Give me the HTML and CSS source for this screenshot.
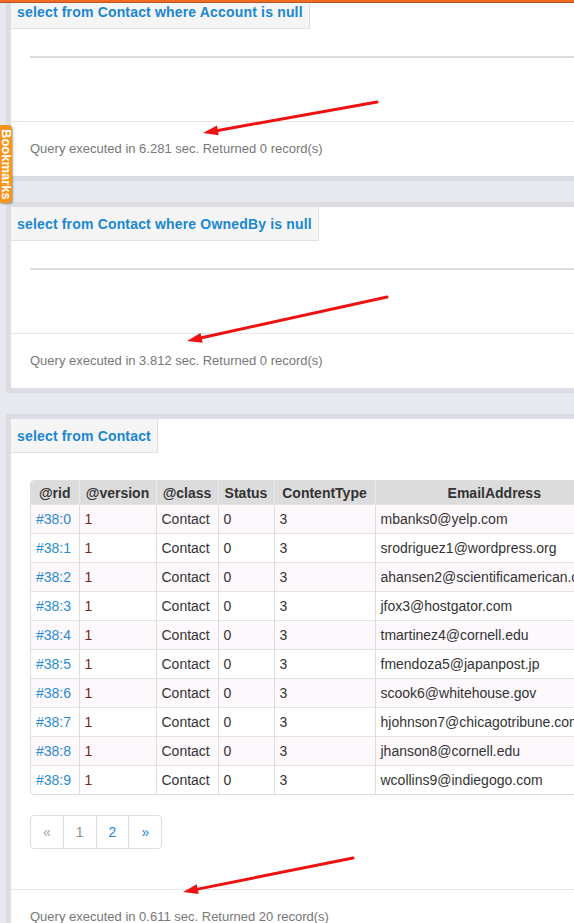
FILE: index.html
```html
<!DOCTYPE html>
<html>
<head>
<meta charset="utf-8">
<link rel="stylesheet" href="styles.css">
</head>
<body>
<div class="topbar"></div>
<div class="page">
  <section class="panel">
    <div class="qhead"><span class="qtab">select from Contact where Account is null</span></div>
    <div class="qbody"><div class="empty"></div></div>
    <div class="qfoot">Query executed in 6.281 sec. Returned 0 record(s)</div>
  </section>
  <section class="panel">
    <div class="qhead"><span class="qtab">select from Contact where OwnedBy is null</span></div>
    <div class="qbody"><div class="empty"></div></div>
    <div class="qfoot">Query executed in 3.812 sec. Returned 0 record(s)</div>
  </section>
  <section class="panel">
    <div class="qhead"><span class="qtab">select from Contact</span></div>
    <div class="qbody">
      <div class="grid">
        <table>
          <colgroup><col class="c1"><col class="c2"><col class="c3"><col class="c4"><col class="c5"><col class="c6"></colgroup>
          <thead><tr><th>@rid</th><th>@version</th><th>@class</th><th>Status</th><th>ContentType</th><th>EmailAddress</th></tr></thead>
          <tbody>
            <tr><td><a class="rid">#38:0</a></td><td class="ver">1</td><td>Contact</td><td>0</td><td>3</td><td>mbanks0@yelp.com</td></tr>
            <tr><td><a class="rid">#38:1</a></td><td class="ver">1</td><td>Contact</td><td>0</td><td>3</td><td>srodriguez1@wordpress.org</td></tr>
            <tr><td><a class="rid">#38:2</a></td><td class="ver">1</td><td>Contact</td><td>0</td><td>3</td><td>ahansen2@scientificamerican.com</td></tr>
            <tr><td><a class="rid">#38:3</a></td><td class="ver">1</td><td>Contact</td><td>0</td><td>3</td><td>jfox3@hostgator.com</td></tr>
            <tr><td><a class="rid">#38:4</a></td><td class="ver">1</td><td>Contact</td><td>0</td><td>3</td><td>tmartinez4@cornell.edu</td></tr>
            <tr><td><a class="rid">#38:5</a></td><td class="ver">1</td><td>Contact</td><td>0</td><td>3</td><td>fmendoza5@japanpost.jp</td></tr>
            <tr><td><a class="rid">#38:6</a></td><td class="ver">1</td><td>Contact</td><td>0</td><td>3</td><td>scook6@whitehouse.gov</td></tr>
            <tr><td><a class="rid">#38:7</a></td><td class="ver">1</td><td>Contact</td><td>0</td><td>3</td><td>hjohnson7@chicagotribune.com</td></tr>
            <tr><td><a class="rid">#38:8</a></td><td class="ver">1</td><td>Contact</td><td>0</td><td>3</td><td>jhanson8@cornell.edu</td></tr>
            <tr><td><a class="rid">#38:9</a></td><td class="ver">1</td><td>Contact</td><td>0</td><td>3</td><td>wcollins9@indiegogo.com</td></tr>
          </tbody>
        </table>
      </div>
      <nav class="pager">
        <a class="dis">&laquo;</a><a class="cur">1</a><a>2</a><a>&raquo;</a>
      </nav>
    </div>
    <div class="qfoot">Query executed in 0.611 sec. Returned 20 record(s)</div>
  </section>
</div>
<div class="bookmarks"><span class="bm-text">Bookmarks</span></div>
<svg class="marks" width="574" height="923" viewBox="0 0 574 923">
  <g stroke="#ee1111" stroke-width="3" stroke-linecap="round" fill="#ee1111">
    <line x1="377" y1="102" x2="217.8" y2="130.4"/>
    <line x1="387" y1="297" x2="201.6" y2="337.8"/>
    <line x1="353" y1="858" x2="197.7" y2="889.1"/>
  </g>
  <g fill="#ee1111">
    <polygon points="203,133 218.7,135.3 216.9,125.5"/>
    <polygon points="187,341 202.7,342.7 200.5,332.9"/>
    <polygon points="183,892 198.7,894 196.7,884.2"/>
  </g>
</svg>
</body>
</html>
```
FILE: styles.css
```css
html, body {
  margin: 0;
  padding: 0;
}
body {
  background: #e8e9ee;
  font-family: "Liberation Sans", Arial, sans-serif;
  width: 574px;
  height: 923px;
  overflow: hidden;
  position: relative;
}
.topbar {
  position: fixed;
  top: 0;
  left: 0;
  right: 0;
  height: 2px;
  background: #f36b21;
  box-shadow: 0 1px 0 #b0562a;
  z-index: 5;
}
.page {
  margin-top: -10px;
  padding-left: 6px;
  width: 700px;
}
.panel {
  background: #fff;
  border: 5px solid #dcdde2;
  margin-bottom: 21px;
}
.qhead {
  display: flex;
}
.qtab {
  display: block;
  background: #f5f5f5;
  border-right: 1px solid #e0e0e0;
  border-bottom: 1px solid #e0e0e0;
  padding: 7px 6px 6px 6px;
  font-weight: bold;
  font-size: 14px;
  line-height: 20px;
  letter-spacing: 0.17px;
  color: #1a87d1;
}
.qbody {
  padding: 27px 19px 20px;
}
.empty {
  border-top: 2px solid #dddddd;
  margin-bottom: 43px;
}
.qfoot {
  border-top: 1px solid #e6e6e6;
  padding: 19px 19px 20px;
  font-size: 13px;
  line-height: 15px;
  color: #777;
}
.grid {
  border: 1px solid #dddddd;
  border-radius: 4px;
  overflow: hidden;
  width: max-content;
}
table {
  border-collapse: collapse;
  table-layout: fixed;
  font-size: 14px;
}
.c1 { width: 48px; }
.c2 { width: 77px; }
.c3 { width: 62px; }
.c4 { width: 56px; }
.c5 { width: 101px; }
.c6 { width: 238px; }
th {
  background: #dcdcdc;
  color: #333;
  font-weight: bold;
  line-height: 20px;
  padding: 2px 4px 1px;
  text-align: center;
  border-left: 1px solid #ebebeb;
  white-space: nowrap;
}
td {
  padding: 4px 5px;
  line-height: 20px;
  color: #333;
  border-left: 1px solid #dddddd;
  border-top: 1px solid #e2e2e2;
  white-space: nowrap;
  overflow: hidden;
}
th:first-child, td:first-child {
  border-left: 0;
}
tbody tr:nth-child(odd) {
  background: #fcf8fc;
}
.rid {
  color: #2a8bd3;
}
.ver {
  color: #7a1d1d;
}
.pager {
  display: flex;
  margin: 20px 0 20px;
}
.pager a {
  display: block;
  padding: 6px 12px;
  font-size: 14px;
  line-height: 20px;
  border: 1px solid #dddddd;
  margin-left: -1px;
  color: #1a87d1;
  text-decoration: none;
  background: #fff;
}
.pager a:first-child {
  margin-left: 0;
  border-radius: 4px 0 0 4px;
}
.pager a:last-child {
  border-radius: 0 4px 4px 0;
}
.pager a.dis {
  color: #a0a0a0;
}
.pager a.cur {
  color: #8c8c8c;
}
.bookmarks {
  position: absolute;
  left: 0;
  top: 125px;
  width: 12px;
  height: 78px;
  background: #f8951d;
  border-radius: 0 4px 4px 0;
  box-shadow: 1px 1px 2px rgba(0, 0, 0, 0.35);
  display: flex;
  align-items: center;
  justify-content: center;
}
.bm-text {
  color: #fff;
  font-weight: bold;
  font-size: 13px;
  line-height: 12px;
  writing-mode: vertical-rl;
  white-space: nowrap;
}
.marks {
  position: absolute;
  left: 0;
  top: 0;
  pointer-events: none;
}
```
